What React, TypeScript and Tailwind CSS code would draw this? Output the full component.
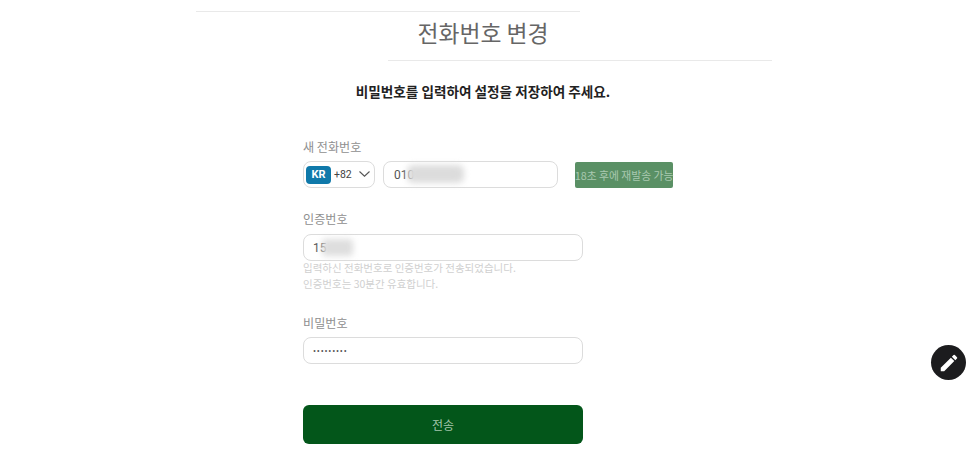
const font = { fontFamily: '"Noto Sans CJK KR", "Noto Sans", sans-serif' };

function Label({ children }: { children: React.ReactNode }) {
  return <div className="h-[20px] text-[12.1px] leading-[22px] text-[#8f8f8f]">{children}</div>;
}

export default function App() {
  return (
    <div className="relative h-[449px] w-[966px] overflow-hidden bg-white" style={font}>
      <div className="ml-[196px] mt-[11px] h-px w-[384px] bg-[#e9e9e9]" />
      <h1 className="mt-[6px] h-[30px] text-center text-[22.8px] font-normal leading-[30px] text-[#666]">전화번호 변경</h1>
      <div className="ml-[388px] mt-[12px] h-px w-[384px] bg-[#e9e9e9]" />
      <p className="mt-[20px] h-[20px] text-center text-[13.6px] font-bold leading-[20px] text-[#222]">비밀번호를 입력하여 설정을 저장하여 주세요.</p>

      <div className="ml-[303px] mt-[35px] w-[370px]">
        <Label>새 전화번호</Label>
        <div className="mt-[5px] flex items-center">
          <div className="flex h-[27px] w-[72px] items-center rounded-[8px] border border-[#dcdcdc] pl-[2px]">
            <span className="mt-[1px] flex h-[18px] w-[25px] items-center justify-center rounded-[4px] bg-[#0f79aa] text-[11px] font-bold text-white" style={{ fontFamily: "Roboto, sans-serif" }}>KR</span>
            <span className="ml-[3px] mt-[1px] text-[10.5px] text-[#444]" style={{ fontFamily: "Roboto, sans-serif" }}>+82</span>
            <svg className="ml-[7px] -mt-[1px]" width="11" height="6" viewBox="0 0 11 6" fill="none" stroke="#555" strokeWidth="1.1"><path d="M0.5 0.5 5.5 5.2 10.5 0.5" /></svg>
          </div>
          <div className="relative ml-[8px] flex h-[27px] w-[175px] items-center rounded-[8px] border border-[#dcdcdc] pl-[10px] text-[12px] text-[#555]" style={{ fontFamily: "Roboto, sans-serif" }}>
            010
            <div className="absolute left-[23px] top-[3px] h-[18px] w-[57px] rounded-[6px] bg-[#dcdcdc] blur-[3px]" />
          </div>
          <div className="ml-[17px] mt-[1px] flex h-[26px] w-[98px] items-center justify-center whitespace-nowrap rounded-[2px] bg-[#5a9065] text-[10.8px] text-[#a9c9b0]">18초 후에 재발송 가능</div>
        </div>

        <div className="mt-[20px]"><Label>인증번호</Label></div>
        <div className="relative mt-[6px] flex h-[27px] w-[280px] items-center rounded-[8px] border border-[#dcdcdc] pl-[9px] text-[12px] text-[#555]" style={{ fontFamily: "Roboto, sans-serif" }}>
          15
          <div className="absolute left-[18px] top-[4px] h-[17px] w-[31px] rounded-[4px] bg-[#dedede] blur-[3px]" />
        </div>
        <div className="-mt-[1px] text-[10.5px] leading-[16px] text-[#d0d0d0]">
          <div>입력하신 전화번호로 인증번호가 전송되었습니다.</div>
          <div>인증번호는 30분간 유효합니다.</div>
        </div>

        <div className="mt-[20px]"><Label>비밀번호</Label></div>
        <div className="mt-[5px] flex h-[27px] w-[280px] items-center rounded-[8px] border border-[#dcdcdc] pl-[9px] pt-[2px] text-[9px] tracking-[0.8px] text-[#555]" style={{ fontFamily: "Roboto, sans-serif" }}>•••••••••</div>

        <button className="mt-[41px] flex h-[39px] w-[280px] items-center justify-center rounded-[6px] bg-[#03561a] text-[12px] text-[#a5c7ad]">전송</button>
      </div>

      <div className="absolute left-[931px] top-[345px] flex h-[35px] w-[35px] items-center justify-center rounded-full bg-[#1c1c1e]">
        <svg width="22" height="22" viewBox="0 0 24 24" fill="#fff"><path d="M3 17.25V21h3.75L17.81 9.94l-3.75-3.75L3 17.25zM20.71 7.04a1 1 0 0 0 0-1.41l-2.34-2.34a1 1 0 0 0-1.41 0l-1.83 1.83 3.75 3.75 1.83-1.83z" /></svg>
      </div>
    </div>
  );
}
